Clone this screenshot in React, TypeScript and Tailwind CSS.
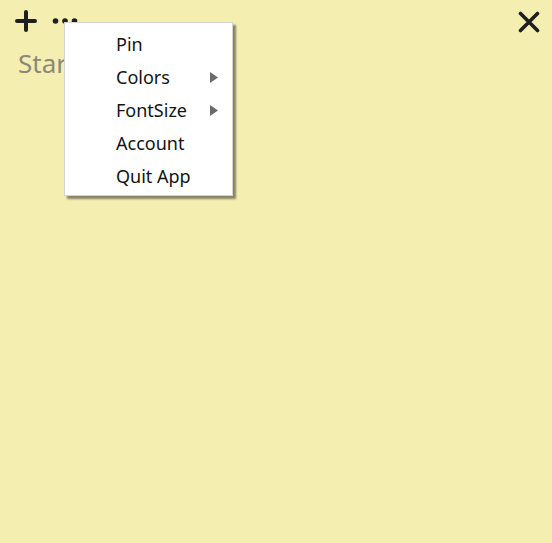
import React from "react";

const items = [
  { label: "Pin", sub: false },
  { label: "Colors", sub: true },
  { label: "FontSize", sub: true },
  { label: "Account", sub: false },
  { label: "Quit App", sub: false },
];

const App: React.FC = () => {
  return (
    <div className="relative h-[543px] w-[552px] overflow-hidden bg-[#f4efb1] font-['Noto_Sans',sans-serif]">
      {/* Toolbar */}
      <div className="flex items-center justify-between pl-[15px] pr-[12px] pt-[8px]">
        <div className="flex items-center gap-[15px]">
          <svg width="22" height="22" viewBox="0 0 22 22">
            <path d="M11 2v18M2 11h18" stroke="#1f1f1f" strokeWidth="4" strokeLinecap="round" />
          </svg>
          <svg width="26" height="8" viewBox="0 0 26 8">
            <circle cx="3.5" cy="4" r="2.8" fill="#1f1f1f" />
            <circle cx="13" cy="4" r="2.8" fill="#1f1f1f" />
            <circle cx="22.5" cy="4" r="2.8" fill="#1f1f1f" />
          </svg>
        </div>
        <svg width="22" height="22" viewBox="0 0 22 22" className="mt-[3px]">
          <path d="M2.5 2.5l17 17M19.5 2.5l-17 17" stroke="#1f1f1f" strokeWidth="3.6" strokeLinecap="round" />
        </svg>
      </div>

      {/* Note body */}
      <div className="pl-[18px] pt-[13px] text-[26px] leading-[34px] text-[#8b8878]">Start typing...</div>

      {/* Context menu */}
      <div className="absolute left-[64px] top-[22px] w-[169px] border border-[#d4d4d4] bg-white pb-[2px] pt-[5px] shadow-[3px_3px_2px_rgba(0,0,0,0.45)]">
        {items.map((item) => (
          <div key={item.label} className="flex h-[33px] items-center justify-between pl-[51px] pr-[14px] text-[18px] text-[#141414]">
            <span>{item.label}</span>
            {item.sub && (
              <svg width="8" height="11" viewBox="0 0 8 11">
                <path d="M0 0l8 5.5L0 11z" fill="#6b6b6b" />
              </svg>
            )}
          </div>
        ))}
      </div>
    </div>
  );
};

export default App;
